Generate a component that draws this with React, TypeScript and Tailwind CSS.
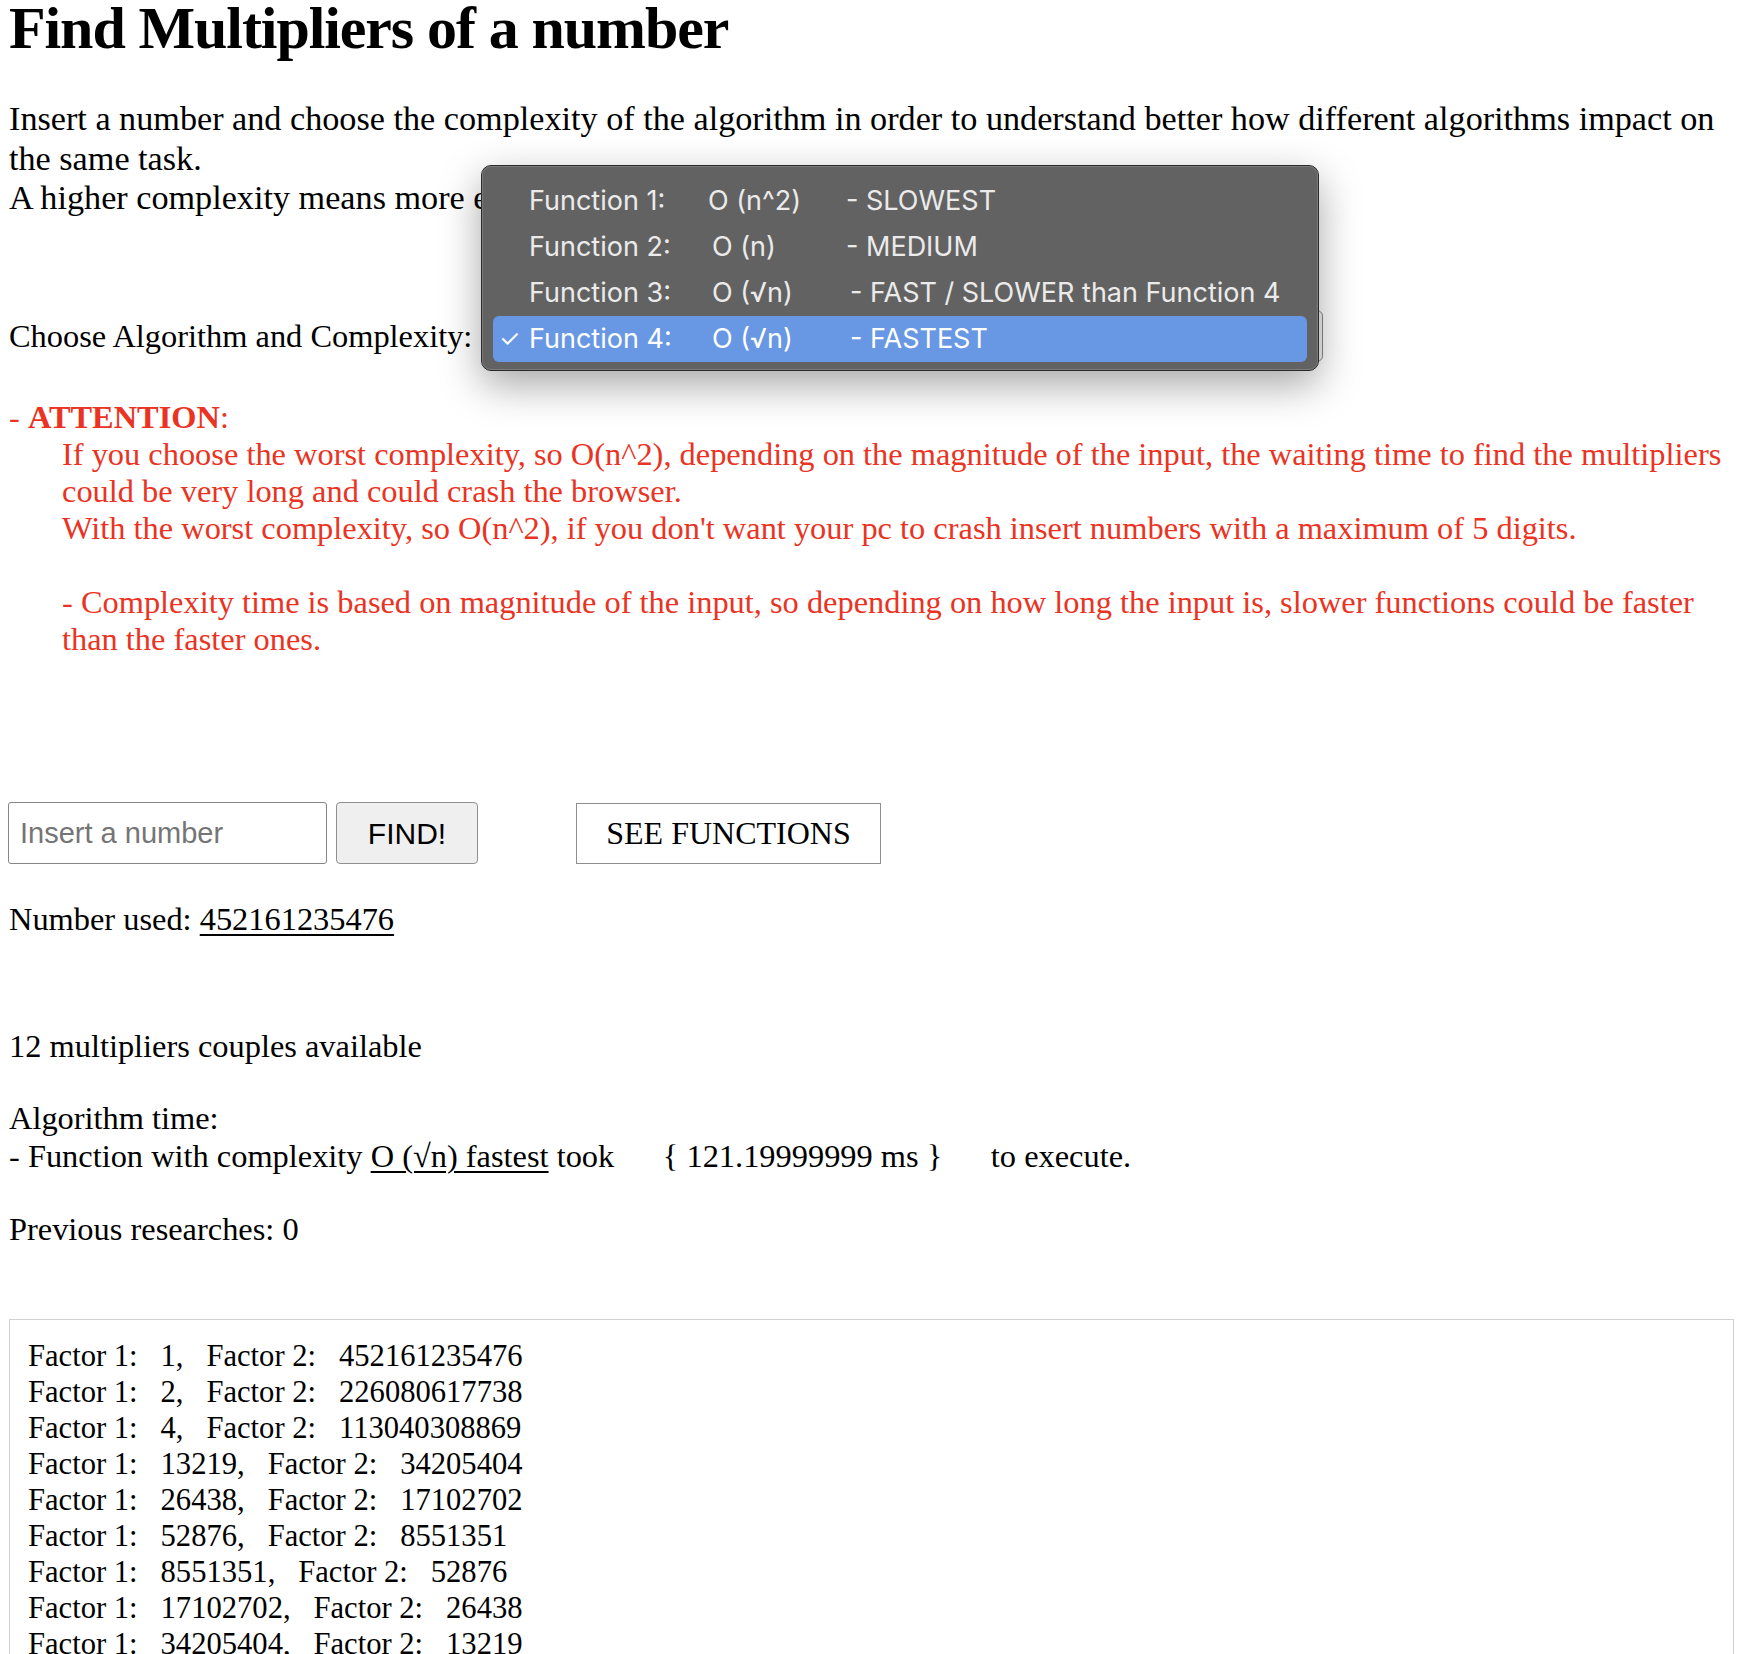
import React from "react";

const pairs: [string, string][] = [
  ["1", "452161235476"],
  ["2", "226080617738"],
  ["4", "113040308869"],
  ["13219", "34205404"],
  ["26438", "17102702"],
  ["52876", "8551351"],
  ["8551351", "52876"],
  ["17102702", "26438"],
  ["34205404", "13219"],
  ["113040308869", "4"],
  ["226080617738", "2"],
  ["452161235476", "1"],
];

type Opt = { name: string; c: string; d: string; w1: string; w2: string; sel?: boolean };

function Popup() {
  const opts: Opt[] = [
    { name: "Function 1:", c: "O (n^2)", d: "- SLOWEST", w1: "w-[179px]", w2: "w-[138px]" },
    { name: "Function 2:", c: "O (n)", d: "- MEDIUM", w1: "w-[183px]", w2: "w-[134px]" },
    { name: "Function 3:", c: "O (√n)", d: "- FAST / SLOWER than Function 4", w1: "w-[183px]", w2: "w-[138px]" },
    { name: "Function 4:", c: "O (√n)", d: "- FASTEST", w1: "w-[183px]", w2: "w-[138px]", sel: true },
  ];
  return (
    <div className="absolute left-[481px] top-[165px] w-[838px] h-[206px] rounded-[10px] border border-[#2a2a2a] bg-[#636262] shadow-[0_14px_40px_rgba(0,0,0,0.35)] font-['Inter',sans-serif] text-[27px]">
      <div className="rounded-[9px] border border-[#7a7a7a] h-full px-[10px] pt-[11px]">
        {opts.map((o) => (
          <div
            key={o.name}
            className={
              o.sel
                ? "flex h-[46px] items-center rounded-[6px] bg-[#6897e3] text-white whitespace-nowrap"
                : "flex h-[46px] items-center text-[#ebebeb] whitespace-nowrap"
            }
          >
            <span className="w-[36px] pl-[6px] text-[24px]">{o.sel ? "✓" : ""}</span>
            <span className={o.w1}>{o.name}</span>
            <span className={o.w2}>{o.c}</span>
            <span>{o.d}</span>
          </div>
        ))}
      </div>
    </div>
  );
}

export default function App() {
  return (
    <div className="relative h-[1654px] w-[1748px] overflow-hidden bg-white font-['Liberation_Serif',serif] text-black">
      <div className="pl-[9px] pr-[14px]">
        <h1 className="text-[60px] font-bold leading-[56px] tracking-[-1.1px] whitespace-nowrap">
          Find Multipliers of a number
        </h1>
        <div className="mt-[43px] text-[34.2px] leading-[39.5px]">
          <div className="whitespace-nowrap">
            Insert a number and choose the complexity of the algorithm in order to understand better how different algorithms impact on
          </div>
          <div className="whitespace-nowrap">the same task.</div>
          <div className="whitespace-nowrap">A higher complexity means more execution time.</div>
        </div>

        <div className="mt-[92.5px] flex h-[52px] items-center text-[32.4px]">
          <span className="whitespace-nowrap">Choose Algorithm and Complexity:</span>
          <div className="ml-[18px] h-[52px] w-[833px] rounded-[6px] border border-[#8a8a8a] bg-[#f4f4f4]" />
        </div>

        <div className="mt-[37px] text-[32.4px] leading-[37px] text-[#ea3323]">
          <div>
            - <b>ATTENTION</b>:
          </div>
          <div className="pl-[53px]">
            <div className="whitespace-nowrap">
              If you choose the worst complexity, so O(n^2), depending on the magnitude of the input, the waiting time to find the multipliers
            </div>
            <div className="whitespace-nowrap">could be very long and could crash the browser.</div>
            <div className="whitespace-nowrap">
              With the worst complexity, so O(n^2), if you don't want your pc to crash insert numbers with a maximum of 5 digits.
            </div>
            <div className="h-[37px]" />
            <div className="whitespace-nowrap">
              - Complexity time is based on magnitude of the input, so depending on how long the input is, slower functions could be faster
            </div>
            <div className="whitespace-nowrap">than the faster ones.</div>
          </div>
        </div>

        <div className="mt-[144px] flex items-center">
          <input
            className="ml-[-1px] h-[62px] w-[319px] rounded-[3px] border border-[#858585] px-[11px] font-['Liberation_Sans',sans-serif] text-[29px] placeholder:text-[#757575] outline-none"
            placeholder="Insert a number"
          />
          <button className="ml-[9px] h-[62px] w-[142px] rounded-[4px] border border-[#8f8f8f] bg-[#efefef] font-['Liberation_Sans',sans-serif] text-[30px] text-black">
            FIND!
          </button>
          <button className="ml-[98px] h-[61px] w-[305px] border border-[#8f8f8f] bg-white font-['Liberation_Serif',serif] text-[32px] text-black">
            SEE FUNCTIONS
          </button>
        </div>

        <div className="mt-[36.5px] text-[32.4px] leading-[37px] whitespace-nowrap">
          Number used: <span className="underline decoration-[2px] underline-offset-[4px]">452161235476</span>
        </div>

        <div className="mt-[90px] text-[32.4px] leading-[37px]">12 multipliers couples available</div>

        <div className="mt-[34.5px] text-[32.4px] leading-[38px]">
          <div>Algorithm time:</div>
          <div className="whitespace-pre">
            {"- Function with complexity "}
            <span className="underline decoration-[2px] underline-offset-[4px]">O (√n) fastest</span>
            {" took      { 121.19999999 ms }      to execute."}
          </div>
        </div>

        <div className="mt-[35.5px] text-[32.4px] leading-[37px]">Previous researches: 0</div>

        <div className="mt-[71.5px] border border-[#d2d2d2] pl-[18px] pt-[18px] pb-[18px] text-[30.6px] leading-[36px]">
          {pairs.map(([a, b], i) => (
            <div key={i} className="whitespace-pre">
              {`Factor 1:   ${a},   Factor 2:   ${b}`}
            </div>
          ))}
        </div>
      </div>
      <Popup />
    </div>
  );
}
